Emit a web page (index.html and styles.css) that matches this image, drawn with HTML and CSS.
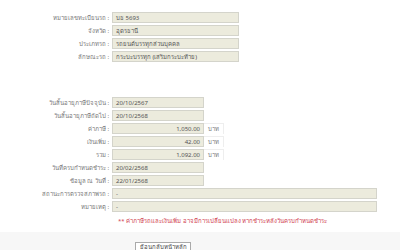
FILE: index.html
```html
<!DOCTYPE html>
<html lang="th">
<head>
    <meta charset="UTF-8">
    <title>ผลการตรวจสอบภาษีรถ</title>
    <link rel="stylesheet" href="styles.css">
</head>
<body>
<div class="page">
    <div class="group car">
        <div class="row"><span class="label">หมายเลขทะเบียนรถ :</span><span class="field">บธ 5693</span></div>
        <div class="row"><span class="label">จังหวัด :</span><span class="field">อุดรธานี</span></div>
        <div class="row"><span class="label">ประเภทรถ :</span><span class="field">รถยนต์บรรทุกส่วนบุคคล</span></div>
        <div class="row"><span class="label">ลักษณะรถ :</span><span class="field">กระบะบรรทุก (เสริมกระบะท้าย)</span></div>
    </div>

    <div class="group tax">
        <div class="row"><span class="label">วันสิ้นอายุภาษีปัจจุบัน :</span><span class="field">20/10/2567</span></div>
        <div class="row"><span class="label">วันสิ้นอายุภาษีถัดไป :</span><span class="field">20/10/2568</span></div>
        <div class="row"><span class="label">ค่าภาษี :</span><span class="field num">1,050.00</span><span class="unit">บาท</span></div>
        <div class="row"><span class="label">เงินเพิ่ม :</span><span class="field num">42.00</span><span class="unit">บาท</span></div>
        <div class="row"><span class="label">รวม :</span><span class="field num">1,092.00</span><span class="unit">บาท</span></div>
        <div class="row"><span class="label">วันที่ครบกำหนดชำระ :</span><span class="field">20/02/2568</span></div>
        <div class="row"><span class="label">ข้อมูล ณ วันที่ :</span><span class="field">22/01/2568</span></div>
        <div class="row"><span class="label">สถานะการตรวจสภาพรถ :</span><span class="field wide">-</span></div>
        <div class="row"><span class="label">หมายเหตุ :</span><span class="field wide">-</span></div>
        <p class="note">** ค่าภาษีรถและเงินเพิ่ม อาจมีการเปลี่ยนแปลง หากชำระหลังวันครบกำหนดชำระ</p>
    </div>
</div>
<div class="footer">
    <button class="btn" type="button">ย้อนกลับหน้าหลัก</button>
</div>
</body>
</html>
```

FILE: styles.css
```css
* {
    padding: 0;
    margin: 0;
    box-sizing: border-box;
}

body {
    background: #fff;
    font-family: Tahoma, "Noto Sans", "DejaVu Sans", sans-serif;
    font-size: 6px;
    color: #666;
}

.page {
    padding-top: 12px;
    height: 232px;
}

.group {
    display: flex;
    flex-direction: column;
    gap: 2px;
}

.tax {
    margin-top: 35px;
}

.row {
    display: flex;
    align-items: center;
    height: 11px;
}

.label {
    width: 112px;
    text-align: right;
    padding-right: 3px;
    color: #777;
    white-space: nowrap;
}

.field {
    width: 127px;
    height: 11px;
    line-height: 10px;
    padding: 0 3px;
    background: #ecebdd;
    border: 1px solid #d4d4cb;
    color: #555;
    white-space: nowrap;
    overflow: hidden;
}

.tax .field {
    width: 92px;
}

.tax .field.wide {
    width: 265px;
}

.field.num {
    text-align: right;
}

.unit {
    height: 11px;
    line-height: 10px;
    padding: 0 4px;
    border-top: 1px solid #eee;
    border-right: 1px solid #eee;
    color: #777;
}

.note {
    margin: 2px 0 0 118px;
    color: #d0404f;
    font-size: 6px;
}

.footer {
    background: #f7f7f7;
    height: 18px;
    padding: 10px 0 0 135px;
}

.btn {
    display: block;
    width: 56px;
    height: 10px;
    line-height: 8px;
    font-family: Tahoma, "Noto Sans", "DejaVu Sans", sans-serif;
    font-size: 6px;
    color: #444;
    background: #fff;
    border: 1px solid #aaa;
}
```
